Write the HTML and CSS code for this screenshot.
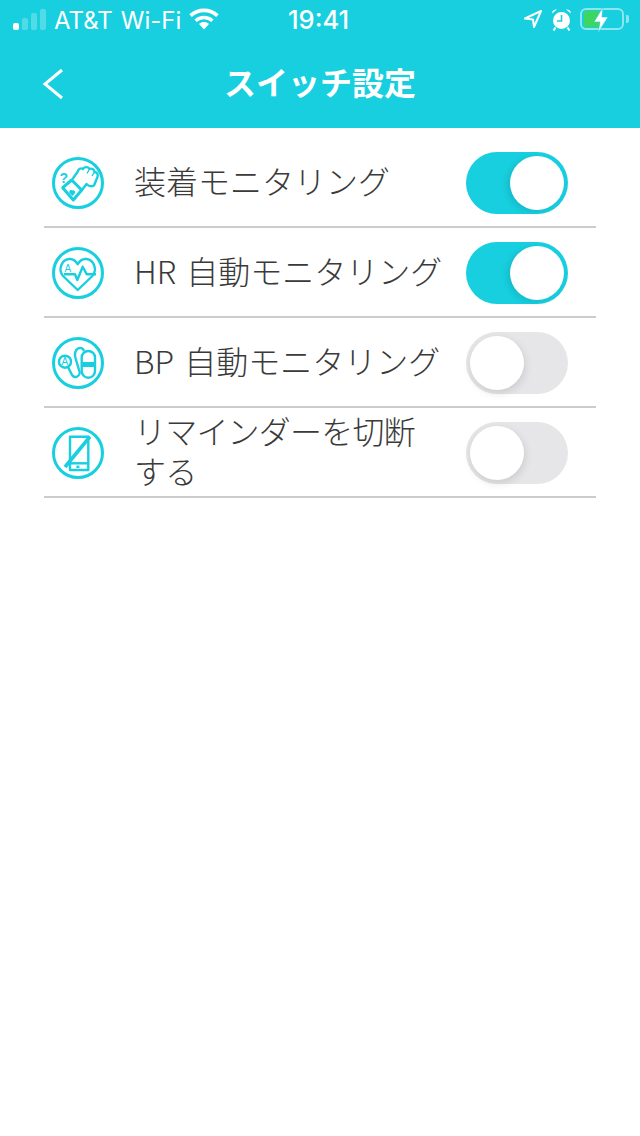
FILE: index.html
```html
<!DOCTYPE html>
<html lang="ja">
<head>
    <meta charset="UTF-8">
    <meta name="viewport" content="width=device-width, initial-scale=1.0">
    <title>スイッチ設定</title>
    <link rel="stylesheet" href="styles.css">
</head>
<body>
    <header class="top">
        <div class="status">
            <div class="status-left">
                <div class="signal">
                    <i class="on"></i><i></i><i></i><i></i>
                </div>
                <span class="carrier">AT&amp;T</span>
                <span class="carrier">Wi-Fi</span>
                <svg class="wifi" width="30" height="22" viewBox="0 0 30 22">
                    <path d="M15 21.5 L10 16 C12.9 13.4 17.1 13.4 20 16 Z" fill="#fff"/>
                    <path d="M6.6 12.8 C11.4 8.4 18.6 8.4 23.4 12.8" fill="none" stroke="#fff" stroke-width="3.4"/>
                    <path d="M1.6 7.6 C9 0.6 21 0.6 28.4 7.6" fill="none" stroke="#fff" stroke-width="3.6"/>
                </svg>
            </div>
            <div class="clock">19:41</div>
            <div class="status-right">
                <svg width="20" height="20" viewBox="0 0 20 20">
                    <path d="M18 2 L2 9.5 L10 10.5 L11 18 Z" fill="none" stroke="#fff" stroke-width="2" stroke-linejoin="round"/>
                </svg>
                <svg width="21" height="23" viewBox="0 0 21 23">
                    <circle cx="10.5" cy="12.5" r="8.5" fill="#fff"/>
                    <path d="M10.5 7 V13 H6" fill="none" stroke="#17cfdf" stroke-width="1.6"/>
                    <path d="M1 5.5 C1 2.5 3.5 1 6 1.5 Z M20 5.5 C20 2.5 17.5 1 15 1.5 Z" fill="#fff"/>
                    <path d="M4.5 19.5 L2.5 22.5 M16.5 19.5 L18.5 22.5" stroke="#fff" stroke-width="2"/>
                </svg>
                <div class="battery">
                    <div class="battery-level"></div>
                    <svg class="bolt" width="16" height="26" viewBox="0 0 16 26">
                        <path d="M10 0 L1 15 H7 L5 26 L15 10 H9 Z" fill="#fff" stroke="#17cfdf" stroke-width="0.6"/>
                    </svg>
                </div>
                <div class="battery-cap"></div>
            </div>
        </div>
        <div class="navbar">
            <svg class="back" width="24" height="32" viewBox="0 0 24 32">
                <path d="M22 2 L5 16 L22 30" fill="none" stroke="#fff" stroke-width="3"/>
            </svg>
            <h1>スイッチ設定</h1>
        </div>
    </header>

    <ul class="settings">
        <li class="row">
            <svg class="row-icon" width="52" height="52" viewBox="0 0 52 52">
                <circle cx="26" cy="26" r="24.5"/>
                <path d="M20.5 22 L25.5 15 C26 12 29 10.5 31 12 C32.5 9.5 36 9.5 37.5 12 C40 11 42.5 12.5 42.5 15 C45 15 46.5 17.5 45.5 20 L42 28.5 C39 30 36.5 29 34.5 27 L30 33"/>
                <path d="M37.5 12 L35 16.5 M42.5 15 L40 19" class="thin"/>
                <path d="M10.7 30.7 L19.7 23 L29.7 33 L21.3 43 Z" class="cuff"/>
                <path d="M20 33.5 C18.5 32 16 34.5 18 36.5 L20.5 39 L23 36 C24 34 21.5 32.5 20 33.5 Z" class="solid"/>
                <text x="7.5" y="26" class="mark q">?</text>
            </svg>
            <span class="row-label">装着モニタリング</span>
            <div class="switch on"><div class="knob"></div></div>
        </li>
        <li class="row">
            <svg class="row-icon" width="52" height="52" viewBox="0 0 52 52">
                <circle cx="26" cy="26" r="24.5"/>
                <path d="M25.7 43 L11 29 C6 23 9 13 17 12 C21 11.6 24 14 25.7 17.3 C27.4 14 30.4 11.6 34.4 12 C42.4 13 45.4 23 40.4 29 Z"/>
                <path d="M12 27.3 H23 L25.3 33 L30.7 19.7 L34.7 27.3 H44"/>
                <text x="12.5" y="24.5" class="mark">A</text>
            </svg>
            <span class="row-label"><span class="gap">HR</span>自動モニタリング</span>
            <div class="switch on"><div class="knob"></div></div>
        </li>
        <li class="row">
            <svg class="row-icon" width="52" height="52" viewBox="0 0 52 52">
                <circle cx="26" cy="26" r="24.5"/>
                <circle cx="13" cy="24.7" r="6"/>
                <path d="M16 30 L19.5 37 C22 43 30 39 27 33 L23.5 21 C21 11 30 8 32 14"/>
                <rect x="29.7" y="14" width="13.3" height="26.7" rx="6.6"/>
                <path d="M29.7 26.3 H43 M29.7 28.7 H43"/>
                <text x="9.6" y="28.3" class="mark">A</text>
            </svg>
            <span class="row-label"><span class="gap">BP</span>自動モニタリング</span>
            <div class="switch"><div class="knob"></div></div>
        </li>
        <li class="row">
            <svg class="row-icon" width="52" height="52" viewBox="0 0 52 52">
                <circle cx="26" cy="26" r="24.5"/>
                <rect x="18" y="9.7" width="18.3" height="33.3"/>
                <path d="M18 36.3 H36.3"/>
                <path d="M13 40 L38 9.7" class="slash"/>
                <rect x="24.4" y="38.6" width="3" height="2.4" class="solid"/>
            </svg>
            <span class="row-label tight">リマインダーを切断する</span>
            <div class="switch"><div class="knob"></div></div>
        </li>
    </ul>
</body>
</html>
```

FILE: styles.css
```css
* {
    box-sizing: border-box;
}
body {
    margin: 0;
    background: #fff;
    font-family: 'Noto Sans CJK JP', 'Noto Sans', sans-serif;
}
.top {
    background: #17cfdf;
    height: 128px;
    color: #fff;
}
.status {
    height: 40px;
    padding: 0 11px 0 13px;
    display: flex;
    align-items: center;
    justify-content: space-between;
    position: relative;
    font-family: Inter, Roboto, sans-serif;
}
.status-left {
    display: flex;
    align-items: center;
    gap: 8px;
}
.signal {
    display: flex;
    align-items: flex-end;
    gap: 3px;
    height: 22px;
    margin-bottom: 2px;
}
.signal i {
    width: 6px;
    background: rgba(255, 255, 255, 0.25);
    border-radius: 2px;
}
.signal i:nth-child(1) { height: 7px; }
.signal i:nth-child(2) { height: 12px; }
.signal i:nth-child(3) { height: 17px; }
.signal i:nth-child(4) { height: 21px; }
.signal i.on {
    background: #fff;
}
.carrier {
    font-size: 24px;
    font-weight: 400;
}
.wifi {
    margin-bottom: 2px;
}
.clock {
    position: absolute;
    left: 288px;
    top: 4px;
    font-size: 25.5px;
    font-weight: 500;
    line-height: 32px;
}
.status-right {
    display: flex;
    align-items: center;
    gap: 8px;
    margin-bottom: 2px;
}
.battery {
    width: 44px;
    height: 22px;
    border: 2px solid rgba(255, 255, 255, 0.5);
    border-radius: 6px;
    padding: 1px 2px;
    position: relative;
}
.battery-level {
    width: 18px;
    height: 16px;
    background: #3fd65f;
    border-radius: 2px;
}
.bolt {
    position: absolute;
    left: 11px;
    top: -3px;
}
.battery-cap {
    width: 3px;
    height: 8px;
    margin-left: -6px;
    background: rgba(255, 255, 255, 0.5);
    border-radius: 0 2px 2px 0;
}
.navbar {
    height: 88px;
    display: flex;
    align-items: center;
    justify-content: center;
    position: relative;
}
.navbar h1 {
    margin: 0 0 5px;
    font-size: 32px;
    font-weight: 700;
    line-height: 83px;
}
.back {
    position: absolute;
    left: 40px;
    top: 28px;
}
.settings {
    list-style: none;
    margin: 10px 44px 0;
    padding: 0;
}
.row {
    height: 90px;
    display: flex;
    align-items: center;
    border-bottom: 2px solid #cccccc;
    padding: 0 28px 0 8px;
}
.row-icon {
    flex: none;
    margin: 2px 30px 0 0;
    fill: none;
    stroke: #17cfdf;
    stroke-width: 2.4;
    stroke-linejoin: round;
}
.row-icon circle:first-child {
    stroke-width: 3;
}
.row-icon .solid {
    fill: #17cfdf;
    stroke: none;
}
.row-icon .slash {
    stroke-width: 3.6;
}
.row-icon .cuff {
    stroke-width: 3;
}
.row-icon .thin {
    stroke-width: 1.4;
}
.row-icon .mark {
    font-family: 'Liberation Sans', sans-serif;
    font-size: 10px;
    fill: #17cfdf;
    stroke: none;
}
.row-icon .q {
    font-size: 14px;
    font-weight: 700;
}
.row-label {
    flex: 1;
    min-width: 0;
    padding: 0 20px 5px 0;
    font-size: 32px;
    font-weight: 300;
    line-height: 40px;
    color: #3a3a3a;
}
.row-label.tight {
    padding-right: 40px;
    letter-spacing: -0.8px;
}
.gap {
    margin-right: 10px;
}
.switch {
    flex: none;
    width: 102px;
    height: 62px;
    margin-top: 2px;
    border-radius: 31px;
    background: #e6e6e8;
    padding: 4px;
    display: flex;
    justify-content: flex-start;
}
.switch.on {
    background: #17cfdf;
    justify-content: flex-end;
}
.knob {
    width: 54px;
    height: 54px;
    border-radius: 50%;
    background: #fff;
    box-shadow: -3px 2px 6px rgba(0, 0, 0, 0.1);
}
.switch:not(.on) .knob {
    box-shadow: 1px 3px 8px rgba(0, 0, 0, 0.12);
}
```
